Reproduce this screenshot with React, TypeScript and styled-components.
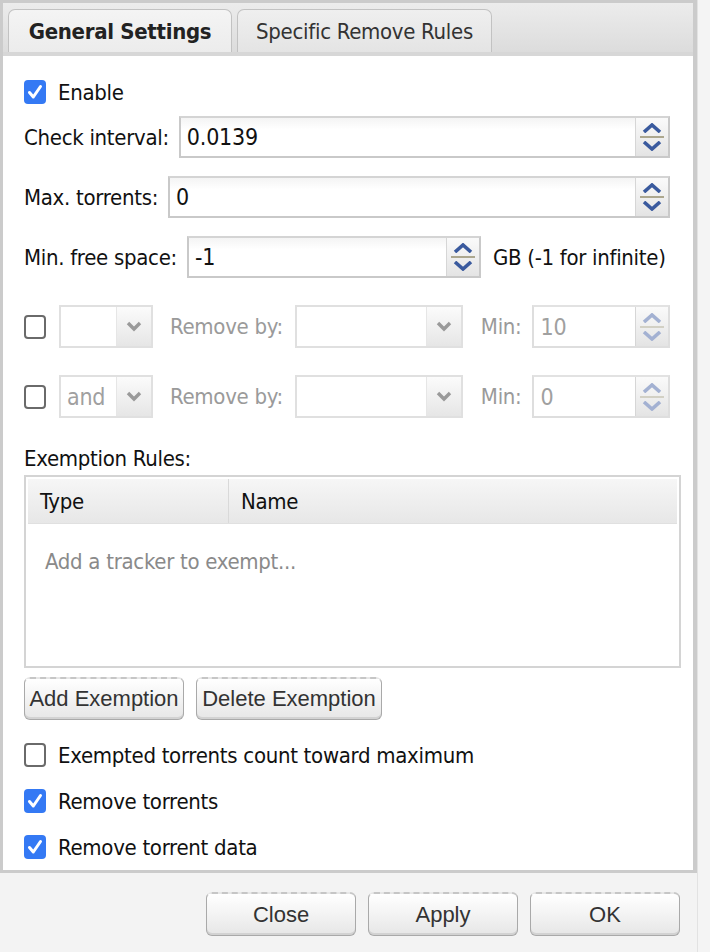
import React from "react";
import styled, { createGlobalStyle } from "styled-components";

const GlobalStyle = createGlobalStyle`
  html, body {
    margin: 0;
    padding: 0;
    background: #f3f3f3;
  }
  body {
    font-family: "DejaVu Sans Condensed", "DejaVu Sans", sans-serif;
    letter-spacing: -0.3px;
    color: #111;
  }
`;

const Page = styled.div`
  width: 710px;
  height: 952px;
  display: flex;
  background: #f3f3f3;
  overflow: hidden;
`;

const Dialog = styled.div`
  width: 697px;
  display: flex;
  flex-direction: column;
`;

const Gutter = styled.div`
  flex: 1;
  background: #f4f4f4;
  border-left: 1px solid #e2e2e2;
`;

const TabPanel = styled.div`
  flex: 1;
  display: flex;
  flex-direction: column;
  border: 3px solid #cbcbcb;
  border-right-width: 4px;
`;

const TabStrip = styled.div`
  height: 49px;
  display: flex;
  align-items: flex-end;
  gap: 5px;
  padding-left: 5px;
  background: linear-gradient(#ececec, #dcdcdc);
  border-bottom: 4px solid #d7d7d7;
`;

const Tab = styled.div<{ $active?: boolean; $w: number }>`
  width: ${(p) => p.$w}px;
  height: 43px;
  box-sizing: border-box;
  display: flex;
  align-items: center;
  justify-content: center;
  border: 1px solid #c2c2c2;
  border-bottom: none;
  border-radius: 7px 7px 0 0;
  background: ${(p) =>
    p.$active ? "linear-gradient(#f4f4f4, #ececec)" : "linear-gradient(#efefef, #e4e4e4)"};
  font-size: 22px;
  font-weight: ${(p) => (p.$active ? 700 : 400)};
  color: ${(p) => (p.$active ? "#222" : "#333")};
`;

const Content = styled.div`
  flex: 1;
  background: #fff;
  padding: 24px 12px 0 21px;
  display: flex;
  flex-direction: column;
`;

const Row = styled.div<{ $mt?: number; $h?: number }>`
  display: flex;
  align-items: center;
  margin-top: ${(p) => p.$mt ?? 0}px;
  height: ${(p) => p.$h ?? 42}px;
  width: 646px;
`;

const Label = styled.span<{ $disabled?: boolean }>`
  font-size: 22px;
  white-space: nowrap;
  color: ${(p) => (p.$disabled ? "#9a9a9a" : "#111")};
`;

const CheckRow = styled.label<{ $mt: number }>`
  display: flex;
  align-items: center;
  gap: 12px;
  margin-top: ${(p) => p.$mt}px;
  height: 24px;
  font-size: 22px;
`;

const Box = styled.span<{ $checked?: boolean }>`
  width: 22px;
  height: 24px;
  box-sizing: border-box;
  border-radius: 4px;
  flex-shrink: 0;
  display: flex;
  align-items: center;
  justify-content: center;
  background: ${(p) => (p.$checked ? "#3479f4" : "#fff")};
  border: ${(p) => (p.$checked ? "none" : "2px solid #6a6a6a")};
`;

const Spin = styled.div<{ $w?: number; $ml?: number; $disabled?: boolean }>`
  ${(p) => (p.$w ? `width: ${p.$w}px;` : "flex: 1;")}
  margin-left: ${(p) => p.$ml ?? 10}px;
  height: 100%;
  box-sizing: border-box;
  display: flex;
  border: 2px solid ${(p) => (p.$disabled ? "#dedede" : "#c9c9c9")};
  border-top-color: ${(p) => (p.$disabled ? "#e2e2e2" : "#d4d4d4")};
  background: #fff;
`;

const SpinValue = styled.div<{ $disabled?: boolean }>`
  flex: 1;
  display: flex;
  align-items: center;
  padding-left: 6px;
  font-size: 23px;
  letter-spacing: -0.2px;
  color: ${(p) => (p.$disabled ? "#a0a0a0" : "#111")};
  background: ${(p) => (p.$disabled ? "#fff" : "linear-gradient(#f4f4f4, #fff 30%)")};
`;

const SpinButtons = styled.div`
  width: 32px;
  display: flex;
  flex-direction: column;
  align-items: center;
  justify-content: center;
  gap: 3px;
  border-left: 1px solid #d6d6d6;
  background: linear-gradient(#fafafa, #e4e4e4);
`;

const SpinSep = styled.div<{ $disabled?: boolean }>`
  width: 24px;
  height: 2px;
  background: ${(p) => (p.$disabled ? "#d2d0c4" : "#aca78e")};
`;

const Select = styled.div<{ $w: number; $ml: number }>`
  width: ${(p) => p.$w}px;
  margin-left: ${(p) => p.$ml}px;
  height: 100%;
  box-sizing: border-box;
  flex-shrink: 0;
  display: flex;
  border: 2px solid #e0e0e0;
  background: #fff;
`;

const SelectValue = styled.div`
  flex: 1;
  display: flex;
  align-items: center;
  padding-left: 6px;
  font-size: 23px;
  color: #a0a0a0;
`;

const SelectArrow = styled.div`
  width: 34px;
  display: flex;
  align-items: center;
  justify-content: center;
  border-left: 1px solid #e6e6e6;
  background: linear-gradient(#fbfbfb, #e6e6e6);
`;

const Suffix = styled.span<{ $ml: number; $disabled?: boolean }>`
  margin-left: ${(p) => p.$ml}px;
  font-size: 22px;
  white-space: nowrap;
  color: ${(p) => (p.$disabled ? "#9a9a9a" : "#111")};
`;

const Table = styled.div`
  margin-top: 5px;
  width: 657px;
  height: 193px;
  box-sizing: border-box;
  border: 2px solid #d4d4d4;
  padding: 2px 2px 0 2px;
  display: flex;
  flex-direction: column;
`;

const HeaderRow = styled.div`
  height: 44px;
  display: flex;
  background: linear-gradient(#f6f6f6, #e7e7e7);
  border-bottom: 1px solid #e0e0e0;
`;

const HeaderCell = styled.div<{ $w?: number }>`
  ${(p) => (p.$w ? `width: ${p.$w}px;` : "flex: 1;")}
  box-sizing: border-box;
  display: flex;
  align-items: center;
  padding-left: 12px;
  font-size: 22px;
  color: #111;
  border-left: 1px solid #d9d9d9;
  &:first-child {
    border-left: none;
  }
`;

const Placeholder = styled.div`
  padding: 25px 0 0 17px;
  font-size: 22px;
  color: #8a8a8a;
`;

const ButtonRow = styled.div`
  display: flex;
  gap: 12px;
  margin-top: 9px;
`;

const Button = styled.button<{ $w: number; $h: number; $fs: number }>`
  width: ${(p) => p.$w}px;
  height: ${(p) => p.$h}px;
  padding: 0;
  border: 1px solid #a9a9a9;
  border-top: 2px dashed #c6c6c6;
  border-radius: 6px;
  background: linear-gradient(#ffffff, #f3f3f3 50%, #e6e6e6);
  box-shadow: inset 0 -2px 0 #d2d2d2;
  font-family: "Liberation Sans", Arial, sans-serif;
  font-size: ${(p) => p.$fs}px;
  letter-spacing: 0;
  color: #333;
`;

const Footer = styled.div`
  height: 79px;
  display: flex;
  justify-content: flex-end;
  align-items: flex-start;
  gap: 12px;
  padding: 19px 17px 0 0;
  box-sizing: border-box;
`;

const Check = () => (
  <svg width="16" height="16" viewBox="0 0 16 16">
    <path d="M2.5 8.5 L6.3 13 L13.5 2.5" fill="none" stroke="#fff" strokeWidth="3" strokeLinecap="round" strokeLinejoin="round" />
  </svg>
);

const Chevron = ({ up, color }: { up?: boolean; color: string }) => (
  <svg width="22" height="10" viewBox="0 0 22 10">
    <path
      d={up ? "M3 9 L11 2 L19 9" : "M3 1 L11 8 L19 1"}
      fill="none"
      stroke={color}
      strokeWidth="3.6"
      strokeLinejoin="miter"
    />
  </svg>
);

const SelectChevron = () => (
  <svg width="18" height="11" viewBox="0 0 18 11">
    <path d="M3 2 L9 8 L15 2" fill="none" stroke="#9a9a9a" strokeWidth="3.4" />
  </svg>
);

const Checkbox = ({ checked, label, mt }: { checked?: boolean; label: string; mt: number }) => (
  <CheckRow $mt={mt}>
    <Box $checked={checked}>{checked && <Check />}</Box>
    {label}
  </CheckRow>
);

const Spinner = ({ value, w, ml, disabled }: { value: string; w?: number; ml?: number; disabled?: boolean }) => {
  const c = disabled ? "#a3b1d2" : "#3a5a9e";
  return (
    <Spin $w={w} $ml={ml} $disabled={disabled}>
      <SpinValue $disabled={disabled}>{value}</SpinValue>
      <SpinButtons>
        <Chevron up color={c} />
        <SpinSep $disabled={disabled} />
        <Chevron color={c} />
      </SpinButtons>
    </Spin>
  );
};

const RuleRow = ({ join, min }: { join: string; min: string }) => (
  <Row $mt={27} $h={43}>
    <Box />
    <Select $w={94} $ml={13}>
      <SelectValue>{join}</SelectValue>
      <SelectArrow>
        <SelectChevron />
      </SelectArrow>
    </Select>
    <Suffix $ml={17} $disabled>
      Remove by:
    </Suffix>
    <Select $w={168} $ml={12}>
      <SelectValue />
      <SelectArrow>
        <SelectChevron />
      </SelectArrow>
    </Select>
    <Suffix $ml={18} $disabled>
      Min:
    </Suffix>
    <Spinner value={min} ml={11} disabled />
  </Row>
);

export default function App() {
  return (
    <>
      <GlobalStyle />
      <Page>
        <Dialog>
          <TabPanel>
            <TabStrip>
              <Tab $active $w={224}>
                General Settings
              </Tab>
              <Tab $w={255}>Specific Remove Rules</Tab>
            </TabStrip>
            <Content>
              <Checkbox checked label="Enable" mt={0} />
              <Row $mt={12}>
                <Label>Check interval:</Label>
                <Spinner value="0.0139" />
              </Row>
              <Row $mt={18}>
                <Label>Max. torrents:</Label>
                <Spinner value="0" />
              </Row>
              <Row $mt={18}>
                <Label>Min. free space:</Label>
                <Spinner value="-1" w={294} />
                <Suffix $ml={12}>GB (-1 for infinite)</Suffix>
              </Row>
              <RuleRow join="" min="10" />
              <RuleRow join="and" min="0" />
              <Row $mt={28} $h={24}>
                <Label>Exemption Rules:</Label>
              </Row>
              <Table>
                <HeaderRow>
                  <HeaderCell $w={200}>Type</HeaderCell>
                  <HeaderCell>Name</HeaderCell>
                </HeaderRow>
                <Placeholder>Add a tracker to exempt...</Placeholder>
              </Table>
              <ButtonRow>
                <Button $w={160} $h={43} $fs={22}>
                  Add Exemption
                </Button>
                <Button $w={186} $h={43} $fs={22}>
                  Delete Exemption
                </Button>
              </ButtonRow>
              <Checkbox label="Exempted torrents count toward maximum" mt={23} />
              <Checkbox checked label="Remove torrents" mt={22} />
              <Checkbox checked label="Remove torrent data" mt={22} />
            </Content>
          </TabPanel>
          <Footer>
            <Button $w={150} $h={44} $fs={22}>
              Close
            </Button>
            <Button $w={150} $h={44} $fs={22}>
              Apply
            </Button>
            <Button $w={150} $h={44} $fs={22}>
              OK
            </Button>
          </Footer>
        </Dialog>
        <Gutter />
      </Page>
    </>
  );
}
